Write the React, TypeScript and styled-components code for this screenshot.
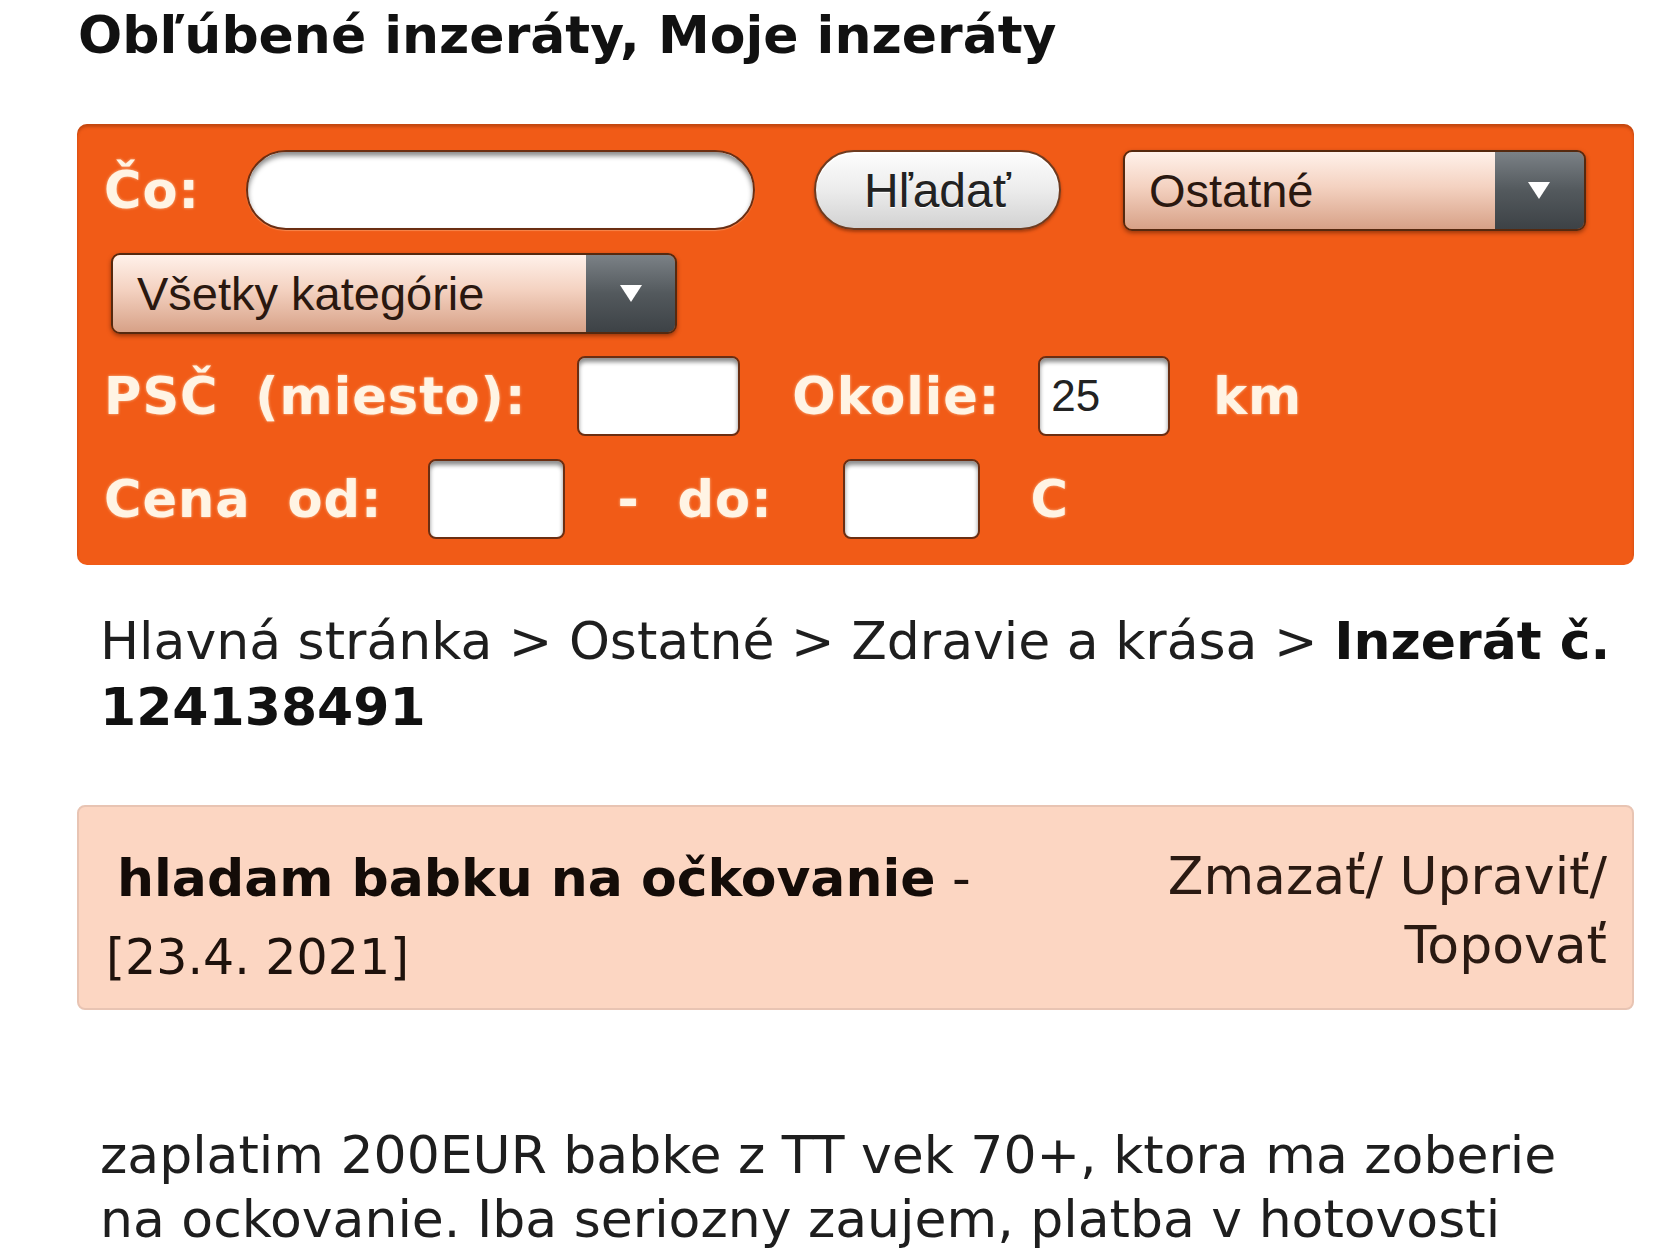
import * as React from 'react';
import styled, { createGlobalStyle } from 'styled-components';

const GlobalStyle = createGlobalStyle`
  html, body {
    margin: 0;
    padding: 0;
    background: #ffffff;
  }
  body {
    font-family: "DejaVu Sans", Verdana, sans-serif;
    color: #1a1a1a;
  }
`;

const Page = styled.div`
  width: 1557px;
  padding-left: 77px;
  padding-bottom: 40px;
`;

const Title = styled.h1`
  margin: 5px 0 0 1px;
  font-size: 52px;
  line-height: 60px;
  font-weight: bold;
  color: #111;
`;

const SearchBox = styled.form`
  margin-top: 59px;
  display: flex;
  flex-direction: column;
  gap: 23px;
  padding: 26px 20px 26px 27px;
  background: #f15b17;
  border-radius: 10px;
  box-shadow: inset 0 3px 3px rgba(110, 35, 0, 0.35);
`;

const Row = styled.div`
  display: flex;
  align-items: center;
  height: 80px;
`;

const Label = styled.span<{ $ml?: number }>`
  margin-left: ${(p) => p.$ml ?? 0}px;
  font-size: 51px;
  font-weight: bold;
  letter-spacing: 1px;
  word-spacing: 18px;
  white-space: nowrap;
  color: #fff4e4;
  text-shadow: 0 0 3px rgba(255, 236, 210, 0.7);
`;

const QueryInput = styled.input<{ $ml?: number }>`
  box-sizing: border-box;
  margin: 0 0 0 ${(p) => p.$ml ?? 0}px;
  width: 509px;
  height: 80px;
  border-radius: 40px;
  border: 2px solid #6b2e12;
  background: #ffffff;
  box-shadow: inset 0 4px 5px rgba(0, 0, 0, 0.45), 0 1px 1px rgba(255, 200, 160, 0.4);
  outline: none;
`;

const SmallInput = styled.input<{ $w: number; $ml?: number }>`
  box-sizing: border-box;
  margin: 0 0 0 ${(p) => p.$ml ?? 0}px;
  width: ${(p) => p.$w}px;
  height: 80px;
  padding: 0 0 0 11px;
  border-radius: 8px;
  border: 2px solid #6b2e12;
  background: #ffffff;
  box-shadow: inset 0 4px 4px rgba(0, 0, 0, 0.45);
  font-family: "Liberation Sans", Arial, sans-serif;
  font-size: 44px;
  color: #222;
  outline: none;
`;

const SearchButton = styled.button<{ $ml?: number }>`
  box-sizing: border-box;
  margin-left: ${(p) => p.$ml ?? 0}px;
  width: 247px;
  height: 80px;
  padding: 0;
  border-radius: 40px;
  border: 2px solid #6e3b20;
  background: linear-gradient(#fdfdfd, #ececec 50%, #d2d2d2);
  box-shadow: inset 0 2px 1px #ffffff, 0 2px 3px rgba(80, 25, 0, 0.45);
  font-family: "Liberation Sans", Arial, sans-serif;
  font-size: 48px;
  color: #222;
  text-shadow: 0 1px 0 #fff;
`;

const Select = styled.div<{ $w: number; $ml?: number }>`
  box-sizing: border-box;
  display: flex;
  margin-left: ${(p) => p.$ml ?? 0}px;
  width: ${(p) => p.$w}px;
  height: 81px;
  border-radius: 9px;
  border: 2px solid #55290f;
  overflow: hidden;
  box-shadow: 0 2px 4px rgba(80, 25, 0, 0.55);
`;

const SelectValue = styled.div`
  flex: 1;
  display: flex;
  align-items: center;
  padding-left: 24px;
  background: linear-gradient(#fff1ea, #f4d2c1 45%, #d7a187);
  font-family: "Liberation Sans", Arial, sans-serif;
  font-size: 47px;
  color: #2a1810;
`;

const SelectArrow = styled.div`
  width: 89px;
  display: flex;
  align-items: center;
  justify-content: center;
  background: linear-gradient(#7b8186, #53595d 50%, #3d4246);
`;

const Breadcrumb = styled.div`
  margin-top: 43px;
  padding: 0 8px 0 23px;
  font-size: 52px;
  line-height: 66px;
  color: #1e1e1e;

  b {
    color: #111;
  }
`;

const AdHeader = styled.div`
  margin-top: 65px;
  display: flex;
  justify-content: space-between;
  align-items: flex-start;
  height: 205px;
  box-sizing: border-box;
  padding: 38px 25px 0 0;
  background: #fcd6c2;
  border: 2px solid #e8c4b3;
  border-radius: 8px;
  color: #1e120c;
  font-size: 52px;
`;

const AdMain = styled.div`
  line-height: 66px;
`;

const AdTitle = styled.div`
  padding-left: 38px;

  b {
    color: #140c08;
  }
`;

const AdDate = styled.div`
  margin-top: 14px;
  padding-left: 27px;
  font-size: 49px;
`;

const AdActions = styled.div`
  margin-top: -3px;
  max-width: 470px;
  text-align: right;
  line-height: 69px;
  color: #2a1a12;
`;

const Body = styled.p`
  margin: 113px 0 0;
  padding: 0 8px 0 23px;
  font-size: 52px;
  line-height: 64px;
  color: #1e1e1e;
`;

const Triangle = () => (
  <svg width="26" height="22" viewBox="0 0 26 22">
    <path d="M2 3 L24 3 L13 20 Z" fill="#ffffff" />
  </svg>
);

export default function App() {
  return (
    <Page>
      <GlobalStyle />
      <Title>Obľúbené inzeráty, Moje inzeráty</Title>

      <SearchBox onSubmit={(e) => e.preventDefault()}>
        <Row>
          <Label>Čo:</Label>
          <QueryInput $ml={46} />
          <SearchButton $ml={59} type="button">Hľadať</SearchButton>
          <Select $w={463} $ml={62}>
            <SelectValue>Ostatné</SelectValue>
            <SelectArrow><Triangle /></SelectArrow>
          </Select>
        </Row>
        <Row>
          <Select $w={566} $ml={7}>
            <SelectValue>Všetky kategórie</SelectValue>
            <SelectArrow><Triangle /></SelectArrow>
          </Select>
        </Row>
        <Row>
          <Label>PSČ (miesto):</Label>
          <SmallInput $w={163} $ml={51} />
          <Label $ml={52}>Okolie:</Label>
          <SmallInput $w={132} $ml={38} defaultValue="25" />
          <Label $ml={43}>km</Label>
        </Row>
        <Row>
          <Label>Cena od:</Label>
          <SmallInput $w={137} $ml={46} />
          <Label $ml={52}>-</Label>
          <Label $ml={38}>do:</Label>
          <SmallInput $w={137} $ml={70} />
          <Label $ml={51}>C</Label>
        </Row>
      </SearchBox>

      <Breadcrumb>
        Hlavná stránka &gt; Ostatné &gt; Zdravie a krása &gt; <b>Inzerát č.</b> <b>124138491</b>
      </Breadcrumb>

      <AdHeader>
        <AdMain>
          <AdTitle>
            <b>hladam babku na očkovanie</b> -
          </AdTitle>
          <AdDate>[23.4. 2021]</AdDate>
        </AdMain>
        <AdActions>Zmazať/ Upraviť/ Topovať</AdActions>
      </AdHeader>

      <Body>
        zaplatim 200EUR babke z TT vek 70+, ktora ma zoberie na ockovanie. Iba seriozny zaujem, platba v
        hotovosti
      </Body>
    </Page>
  );
}
